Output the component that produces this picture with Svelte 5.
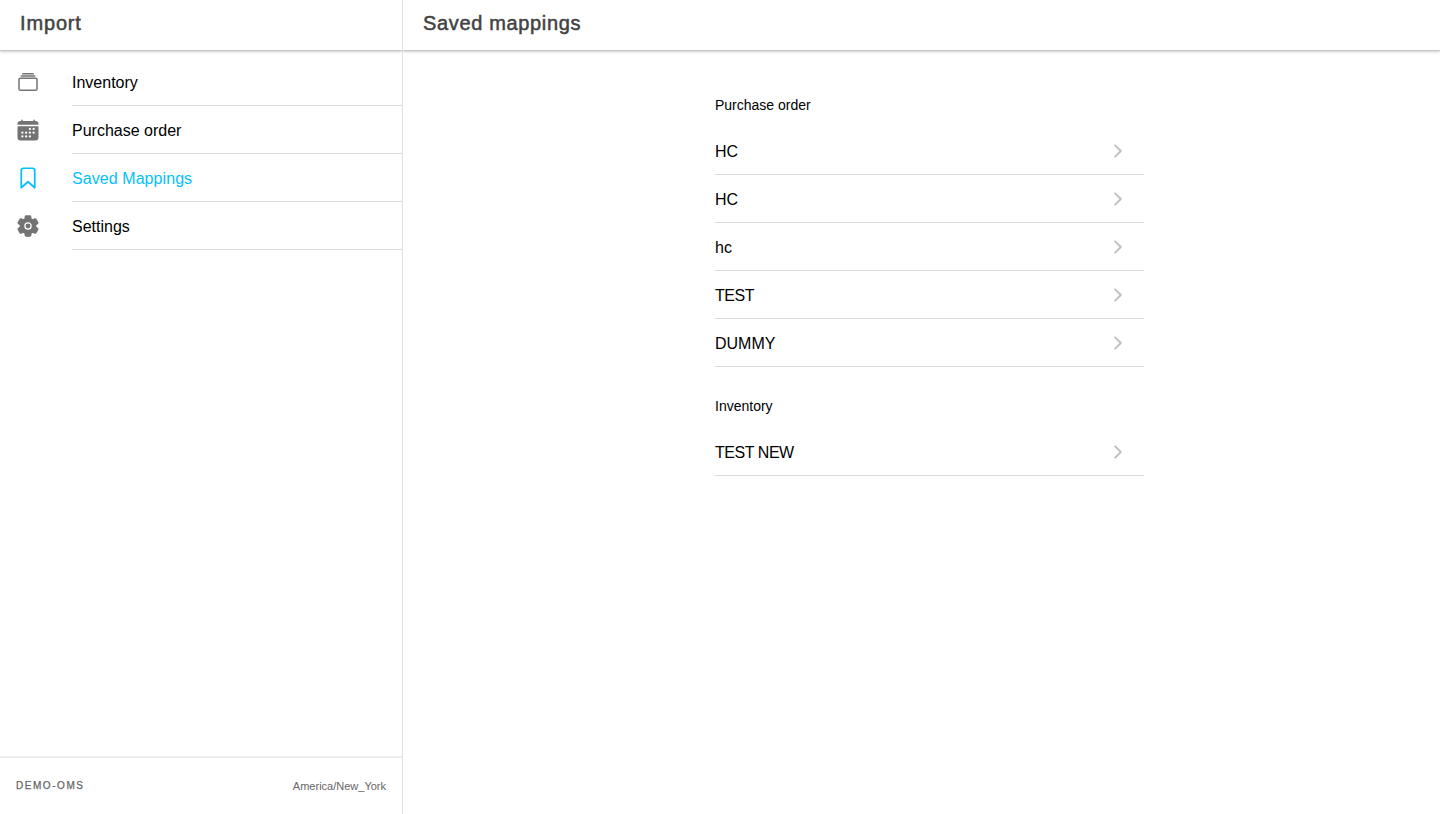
<script>
  const menu = [
    { label: 'Inventory', icon: 'albums' },
    { label: 'Purchase order', icon: 'calendar' },
    { label: 'Saved Mappings', icon: 'bookmark', active: true },
    { label: 'Settings', icon: 'settings' }
  ];
  const groups = [
    { title: 'Purchase order', items: ['HC', 'HC', 'hc', 'TEST', 'DUMMY'] },
    { title: 'Inventory', items: ['TEST NEW'] }
  ];
</script>

<div class="app">
  <aside>
    <header><h1 class="brand">Import</h1></header>
    <nav>
      {#each menu as item}
        <a class="entry" class:active={item.active}>
          <svg class="icon" viewBox="0 0 512 512">
            {#if item.icon === 'albums'}
              <g class="line">
                <rect x="64" y="176" width="384" height="256" rx="28.87" />
                <path d="M144 80h224M112 128h288" />
              </g>
            {:else if item.icon === 'calendar'}
              <path d="M480 128a64 64 0 00-64-64h-16V48a16 16 0 00-32 0v16H144V48a16 16 0 00-32 0v16H96a64 64 0 00-64 64v12a4 4 0 004 4h440a4 4 0 004-4zM32 416a64 64 0 0064 64h320a64 64 0 0064-64V179a3 3 0 00-3-3H35a3 3 0 00-3 3z" />
              <g fill="#fff">
                {#each [[296, 232], [376, 232], [136, 312], [216, 312], [296, 312], [376, 312], [136, 392], [216, 392], [296, 392]] as [cx, cy]}
                  <circle {cx} {cy} r="24" />
                {/each}
              </g>
            {:else if item.icon === 'bookmark'}
              <path class="line bold" d="M352 48H160a48 48 0 00-48 48v368l144-128 144 128V96a48 48 0 00-48-48z" />
            {:else}
              <circle cx="256" cy="256" r="53" />
              <path d="M470.39 300l-.47-.38-31.56-24.75a16.11 16.11 0 01-6.1-13.33v-11.56a16 16 0 016.11-13.22L469.92 212l.47-.38a26.68 26.68 0 005.9-34.06l-42.71-73.9a1.59 1.59 0 01-.13-.22A26.86 26.86 0 00401 92.14l-.35.13-37.1 14.93a15.94 15.94 0 01-14.47-1.29q-4.92-3.1-10-5.86a15.94 15.94 0 01-8.19-11.82l-5.59-39.59-.12-.72A27.22 27.22 0 00298.76 26h-85.52a26.92 26.92 0 00-26.45 22.39l-.09.56-5.57 39.67a16 16 0 01-8.13 11.82 175.21 175.21 0 00-10 5.82 15.92 15.92 0 01-14.43 1.27l-37.13-15-.35-.14a26.87 26.87 0 00-32.48 11.34l-.13.22-42.77 73.95a26.71 26.71 0 005.9 34.1l.47.38 31.56 24.75a16.11 16.11 0 016.1 13.33v11.56a16 16 0 01-6.11 13.22L42.08 300l-.47.38a26.68 26.68 0 00-5.9 34.06l42.71 73.9a1.59 1.59 0 01.13.22 26.86 26.86 0 0032.45 11.3l.35-.13 37.07-14.93a15.94 15.94 0 0114.47 1.29q4.92 3.11 10 5.86a15.94 15.94 0 018.19 11.82l5.56 39.59.12.72A27.22 27.22 0 00213.24 486h85.52a26.92 26.92 0 0026.45-22.39l.09-.56 5.57-39.67a16 16 0 018.18-11.82c3.42-1.84 6.76-3.79 10-5.82a15.92 15.92 0 0114.43-1.27l37.13 14.95.35.14a26.85 26.85 0 0032.48-11.34 2.53 2.53 0 01.13-.22l42.71-73.89a26.7 26.7 0 00-5.89-34.11zm-134.48-40.24a80 80 0 11-83.66-83.67 80.21 80.21 0 0183.66 83.67z" />
            {/if}
          </svg>
          <span class="label">{item.label}</span>
        </a>
      {/each}
    </nav>
    <footer>
      <span class="oms">DEMO-OMS</span>
      <span class="zone">America/New_York</span>
    </footer>
  </aside>

  <section class="page">
    <header><h1>Saved mappings</h1></header>
    <main>
      {#each groups as group}
        <div class="group">
          <h2>{group.title}</h2>
          {#each group.items as name}
            <div class="row">
              <span class="name" class:tight={name.startsWith('TEST')}>{name}</span>
              <svg class="chevron" viewBox="0 0 512 512">
                <path d="M184 112l144 144-144 144" />
              </svg>
            </div>
          {/each}
        </div>
      {/each}
    </main>
  </section>
</div>

<style>
  :global(body) {
    margin: 0;
    background: #fff;
  }
  .app {
    display: flex;
    height: 814px;
    overflow: hidden;
    font-family: "Liberation Sans", Arial, sans-serif;
    font-size: 16px;
    color: #000;
  }
  aside {
    box-sizing: border-box;
    width: 403px;
    flex: none;
    display: flex;
    flex-direction: column;
    border-right: 1px solid #dedede;
  }
  .page {
    flex: 1;
    display: flex;
    flex-direction: column;
  }
  header {
    box-sizing: border-box;
    flex: none;
    height: 50px;
    padding: 11px 20px 0;
    box-shadow: 0 1px 0 rgba(0, 0, 0, 0.06), 0 2px 0 rgba(0, 0, 0, 0.04), 0 2px 3px rgba(0, 0, 0, 0.16);
    clip-path: inset(0 0 -8px 0);
  }
  h1 {
    margin: 0;
    font-size: 20px;
    line-height: 24px;
    font-weight: 400;
    letter-spacing: 0.65px;
    color: #424242;
    -webkit-text-stroke: 0.5px #424242;
  }
  .brand {
    letter-spacing: 0.85px;
  }
  nav {
    flex: 1;
    padding-top: 8px;
  }
  .entry {
    display: flex;
    align-items: center;
    height: 48px;
    padding-left: 16px;
  }
  .icon {
    width: 24px;
    height: 24px;
    margin-right: 32px;
    fill: #737373;
    stroke: none;
    color: #737373;
  }
  .active .icon {
    color: #04bffe;
  }
  .line {
    fill: none;
    stroke: currentColor;
    stroke-width: 32;
    stroke-linecap: round;
    stroke-linejoin: round;
  }
  .bold {
    stroke-width: 37;
  }
  .label {
    flex: 1;
    box-sizing: border-box;
    height: 48px;
    line-height: 50px;
    border-bottom: 1px solid #d9d9d9;
  }
  .active .label {
    color: #04bffe;
    letter-spacing: 0.07px;
  }
  footer {
    box-sizing: border-box;
    height: 58px;
    padding: 0 16px;
    display: flex;
    align-items: center;
    justify-content: space-between;
    border-top: 2px solid #ededed;
    color: #666;
  }
  .oms {
    font-size: 10px;
    letter-spacing: 1.55px;
    padding-bottom: 2px;
    -webkit-text-stroke: 0.25px #666;
  }
  .zone {
    font-size: 11px;
  }
  main {
    width: 429px;
    margin-left: 312px;
    padding-top: 36px;
  }
  .group {
    margin-bottom: 20px;
  }
  h2 {
    margin: 0;
    height: 41px;
    font-size: 14px;
    font-weight: 400;
    line-height: 38px;
  }
  .row {
    box-sizing: border-box;
    height: 48px;
    padding-right: 16px;
    display: flex;
    align-items: center;
    justify-content: space-between;
    border-bottom: 1px solid #d9d9d9;
  }
  .name {
    padding-top: 2px;
  }
  .tight {
    letter-spacing: -0.45px;
  }
  .chevron {
    width: 20px;
    height: 20px;
    fill: none;
    stroke: #bfbfbf;
    stroke-width: 50;
    stroke-linecap: round;
    stroke-linejoin: round;
  }
</style>
